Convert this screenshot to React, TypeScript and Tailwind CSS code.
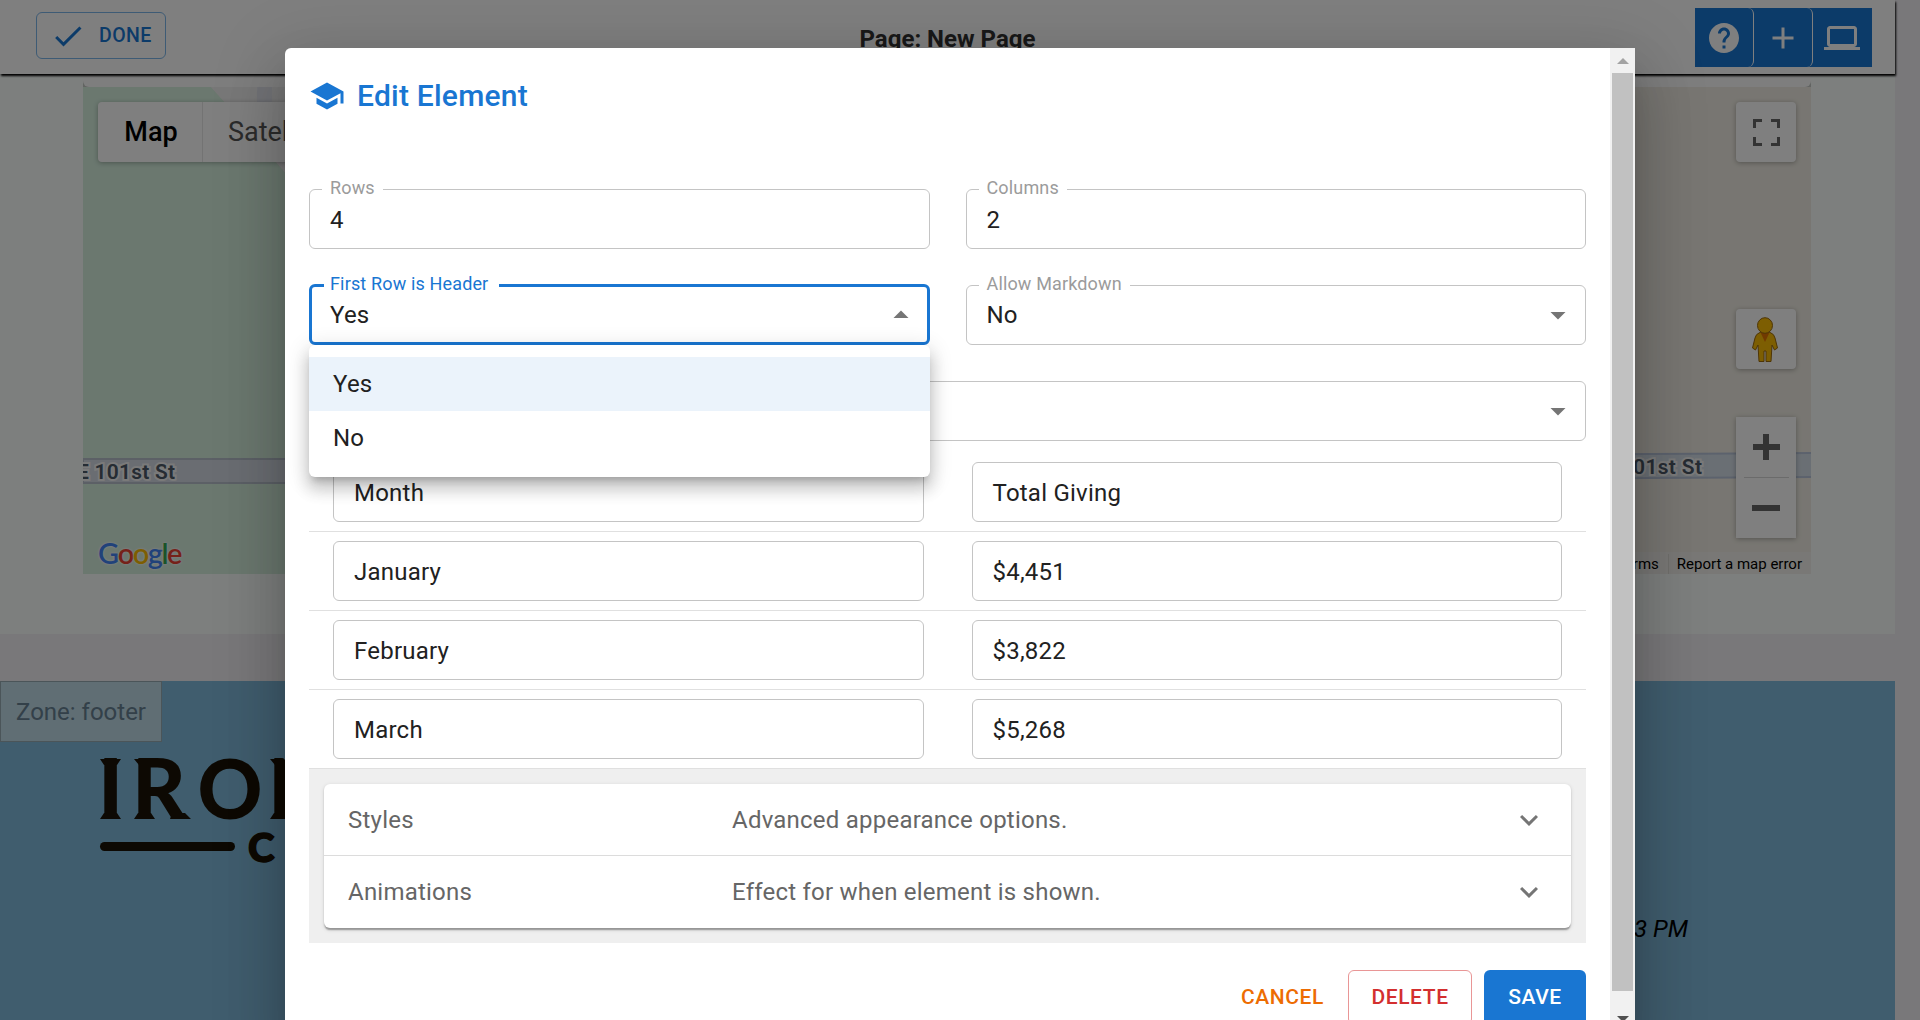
import type { ReactNode } from "react";

const PATHS = {
  check: "M9 16.17 4.83 12l-1.42 1.41L9 19 21 7l-1.41-1.41z",
  help: "M12 2C6.48 2 2 6.48 2 12s4.48 10 10 10 10-4.48 10-10S17.52 2 12 2zm1 17h-2v-2h2v2zm2.07-7.75-.9.92C13.45 12.9 13 13.5 13 15h-2v-.5c0-1.1.45-2.1 1.17-2.83l1.24-1.26c.37-.36.59-.86.59-1.41 0-1.1-.9-2-2-2s-2 .9-2 2H8c0-2.21 1.79-4 4-4s4 1.79 4 4c0 .88-.36 1.68-.93 2.25z",
  add: "M19 13h-6v6h-2v-6H5v-2h6V5h2v6h6v2z",
  computer: "M20 18c1.1 0 1.99-.9 1.99-2L22 6c0-1.1-.9-2-2-2H4c-1.1 0-2 .9-2 2v10c0 1.1.9 2 2 2H0v2h24v-2h-4zM4 6h16v10H4V6z",
  school: "M5 13.18v4L12 21l7-3.82v-4L12 17l-7-3.82zM12 3 1 9l11 6 9-4.91V17h2V9L12 3z",
  down: "m7 10 5 5 5-5z",
  up: "m7 14 5-5 5 5z",
  expand: "M16.59 8.59 12 13.17 7.41 8.59 6 10l6 6 6-6z",
};

function Icon({ name, className = "" }: { name: keyof typeof PATHS; className?: string }) {
  return (
    <svg viewBox="0 0 24 24" fill="currentColor" className={`size-9 shrink-0 ${className}`}>
      <path d={PATHS[name]} />
    </svg>
  );
}

function Field({ label, value, arrow, active }: { label?: string; value: string; arrow?: "up" | "down"; active?: boolean }) {
  return (
    <div
      className={`relative flex items-center justify-between rounded-md ${
        active ? "-mt-px h-[61px] border-3 border-[#1976d2] pt-px pr-2 pl-[18px]" : "h-15 border border-[#c4c4c4] pr-[9px] pl-5"
      }`}
    >
      {label && (
        <span
          className={`absolute bg-white text-lg leading-6 tracking-[0.15px] ${
            active ? "-top-[15px] left-3 pr-[11px] pl-[6px] text-[#1976d2]" : "-top-[14px] left-3 px-2 text-[#9b9b9b]"
          }`}
        >
          {label}
        </span>
      )}
      <span className={arrow ? "" : "pt-0.5"}>{value}</span>
      {arrow && <Icon name={arrow} className="text-[#757575]" />}
    </div>
  );
}

function ToolButton({ children, last }: { children: ReactNode; last?: boolean }) {
  return (
    <button className={`flex h-[59px] w-[59px] items-center justify-center rounded-md border-r text-white ${last ? "border-transparent" : "border-white"}`}>
      {children}
    </button>
  );
}

function MapView() {
  return (
    <div className="relative h-[487px] w-[1728px] overflow-hidden bg-[#f0ede4]">
      <svg className="absolute inset-0" width="1728" height="487" viewBox="0 0 1728 487">
        <path d="M0 0H128L146 20L300 200V487H0Z" fill="#d6f0df" />
        <path d="M128 0H300V200L146 20Z" fill="#f1f1f1" />
        <path d="M174 0h15v20h-15z" fill="#e4e6ee" />
        <path d="M0 372H300V396H0Z" fill="#d5dae4" stroke="#b9c1cd" strokeWidth="2" />
        <path d="M1400 368L1730 366V390L1400 392Z" fill="#d5dfe8" stroke="#b9c5da" strokeWidth="2" />
        <g fontFamily="Roboto" fontWeight="600" fontSize="21" fill="#4c5866" stroke="#f4f4f4" strokeWidth="4" paintOrder="stroke">
          <text x="-6" y="392" textLength="98">E 101st St</text>
          <text x="1520" y="387" textLength="99">E 101st St</text>
        </g>
      </svg>
      <div className="absolute top-[15px] left-[15px] flex h-15 items-center rounded-sm bg-white text-[27px] shadow-[0_1px_5px_rgba(0,0,0,0.3)]">
        <span className="flex h-15 w-[105px] items-center justify-center border-r border-[#e6e6e6] pt-0.5 pl-0.5 font-medium text-black">Map</span>
        <span className="px-[25px] pt-0.5 text-[#565656]">Satellite</span>
      </div>
      <div className="absolute bottom-[3px] left-[15px] flex font-[Lato] text-[29px] leading-[36px] font-semibold tracking-[-1.5px] [text-shadow:0_0_2px_#fff,0_0_3px_#fff]">
        <span className="text-[#4285f4]">G</span>
        <span className="text-[#ea4335]">o</span>
        <span className="text-[#fbbc04]">o</span>
        <span className="text-[#4285f4]">g</span>
        <span className="text-[#34a853]">l</span>
        <span className="text-[#ea4335]">e</span>
      </div>
      <div className="absolute top-[15px] left-[1653px] flex size-15 items-center justify-center rounded-sm bg-white shadow-[0_1px_5px_rgba(0,0,0,0.3)]">
        <svg width="27" height="27" viewBox="0 0 18 18" fill="#666">
          <path d="M0 0v6h2V2h4V0H0zm16 0h-4v2h4v4h2V0h-2zm0 16h-4v2h6v-6h-2v4zM2 12H0v6h6v-2H2v-4z" />
        </svg>
      </div>
      <div className="absolute top-[222px] left-[1653px] flex size-15 items-center justify-center rounded-sm bg-white pr-0.5 shadow-[0_1px_5px_rgba(0,0,0,0.3)]">
        <svg width="28" height="45" viewBox="0 0 28 45" fill="#fbbc04" stroke="#9c6a0c" strokeWidth="1">
          <path d="M8 16Q14 12 20 16Q23 17 24 21L26.500 31L23.500 33L21 28L20 44.500H15V34H13V44.500H8L7 28L4.500 33L1.500 31L4 21Q5 17 8 16Z" />
          <path d="M9.500 15.500L14 25L18.500 15.500Z" fill="#e37400" stroke="none" />
          <ellipse cx="14" cy="8.500" rx="7.500" ry="7.800" />
        </svg>
      </div>
      <div className="absolute top-[330px] left-[1653px] flex w-15 flex-col items-center bg-white shadow-[0_1px_5px_rgba(0,0,0,0.3)]">
        <svg width="60" height="60" viewBox="0 0 60 60" fill="#666">
          <path d="M27 17h6v10h11v6H33v10h-6V33H17v-6h10z" />
        </svg>
        <div className="h-px w-[45px] bg-[#d6d6d6]" />
        <svg width="60" height="60" viewBox="0 0 60 60" fill="#666">
          <path d="M16 27h28v6H16z" />
        </svg>
      </div>
      <div className="absolute right-0 bottom-0 flex h-[22px] items-center bg-[#f3f1ec] pt-0.5 text-[15px] leading-5 text-black">
        <span className="border-r border-[#e0ded8] px-[9px]">Terms</span>
        <span className="pr-[9px] pl-2">Report a map error</span>
      </div>
    </div>
  );
}

function FooterLogo() {
  return (
    <svg className="absolute top-[73px] left-[96px]" width="240" height="120" viewBox="0 0 240 120" fill="#1b1206">
      <g fontFamily="Lato" fontWeight="900" fontSize="83">
        <text x="14.500" y="65" textAnchor="middle">I</text>
        <text x="36" y="65">R</text>
        <text x="134" y="65" fontSize="81" textAnchor="middle" textLength="65" lengthAdjust="spacingAndGlyphs">O</text>
        <text x="172" y="65">N</text>
      </g>
      <path d="M4 5h21l-4 6H8zM4 65h21l-4-6H8zM38 5h14v6h-9zM38 65h21l-4-6H42zM74 65h21l-6-6H76zM174 5h14v6h-9zM174 65h21l-4-6h-13z" />
      <rect x="4" y="88" width="135" height="9" rx="4.500" />
      <text x="152" y="108" fontFamily="Lato" fontWeight="900" fontSize="40" stroke="#1b1206" strokeWidth="1.500">C</text>
    </svg>
  );
}

function PageBehind() {
  return (
    <div className="h-[1020px] w-[1895px] tracking-normal">
      <header className="relative z-10 grid h-[74px] grid-cols-[1fr_auto_1fr] items-start bg-white pr-[23px] pl-9 shadow-[1px_2px_2px_0_#000]">
        <button className="mt-3 flex h-[47px] w-[130px] items-center gap-[13px] rounded-md border border-[#7db6ea] pl-[13px] text-[19.5px] font-medium tracking-[0.4px] text-[#1976d2]">
          <Icon name="check" />
          <span className="pt-px">DONE</span>
        </button>
        <h1 className="mt-[21px] mr-[13px] text-2xl leading-9 font-bold text-[#333]">Page: New Page</h1>
        <div className="mt-2 flex justify-self-end bg-[#1976d2]">
          <ToolButton><Icon name="help" /></ToolButton>
          <ToolButton><Icon name="add" /></ToolButton>
          <ToolButton last><Icon name="computer" /></ToolButton>
        </div>
      </header>
      <section className="flex h-[560px] flex-col bg-[#fafffc] px-[83px]">
        <div className="h-[13px] w-[1728px] shrink-0 bg-[#c4c8c4]">
          <div className="h-full rounded-b-md bg-[#fcfcfc]" />
        </div>
        <MapView />
      </section>
      <div className="h-[47px]" />
      <footer className="relative h-[339px] bg-[#80bbdc]">
        <div className="flex h-[61px] w-[162px] items-center border border-[#97abb3] bg-[#c0dce8] pl-[15px] text-[#668193]">Zone: footer</div>
        <FooterLogo />
        <p className="mt-[171px] pr-[207px] text-right text-black italic">3 PM</p>
      </footer>
    </div>
  );
}

const rows = [
  ["Month", "Total Giving"],
  ["January", "$4,451"],
  ["February", "$3,822"],
  ["March", "$5,268"],
];

const panels = [
  ["Styles", "Advanced appearance options."],
  ["Animations", "Effect for when element is shown."],
];

function Dialog() {
  return (
    <div className="absolute top-12 left-[285px] flex h-[1010px] w-[1350px] overflow-hidden rounded-tl-md bg-white">
      <div className="w-[1325px] pr-[24px] pl-6">
        <div className="flex items-center gap-3 pt-[28px] text-[30px] leading-10 font-medium text-[#1976d2]">
          <Icon name="school" />
          Edit Element
        </div>
        <div className="mt-[73px] grid grid-cols-2 gap-9">
          <Field label="Rows" value="4" />
          <Field label="Columns" value="2" />
          <div className="relative">
            <Field label="First Row is Header" value="Yes" arrow="up" active />
            <ul className="absolute top-15 left-0 z-10 w-full rounded-md bg-white py-3 shadow-[0_7.5px_7.5px_-4.5px_rgba(0,0,0,0.2),0_12px_15px_1.5px_rgba(0,0,0,0.14),0_4.5px_21px_3px_rgba(0,0,0,0.12)]">
              <li className="flex h-[54px] items-center bg-[#ebf3fb] pl-6">Yes</li>
              <li className="flex h-[54px] items-center pl-6">No</li>
            </ul>
          </div>
          <Field label="Allow Markdown" value="No" arrow="down" />
          <div className="col-span-2">
            <Field value="" arrow="down" />
          </div>
        </div>
        <div className="mt-3">
          {rows.map(([month, total]) => (
            <div key={month} className="grid h-[79px] grid-cols-2 gap-12 border-b border-[#e0e0e0] px-6 pt-[9px]">
              <Field value={month} />
              <Field value={total} />
            </div>
          ))}
        </div>
        <div className="bg-[#efefef] p-[15px]">
          <div className="divide-y divide-[#dcdcdc] rounded-md bg-white text-[#666] shadow-[0_3px_1.5px_-1.5px_rgba(0,0,0,0.2),0_1.5px_1.5px_rgba(0,0,0,0.14),0_1.5px_4.5px_rgba(0,0,0,0.12)]">
            {panels.map(([name, note]) => (
              <div key={name} className="flex h-[72px] items-center pr-6 pl-6">
                <span className="w-[384px]">{name}</span>
                <span className="grow">{note}</span>
                <Icon name="expand" className="text-[#757575]" />
              </div>
            ))}
          </div>
        </div>
        <div className="mt-[27px] flex justify-end gap-3 text-[21px] font-medium tracking-[0.6px]">
          <button className="h-[55px] px-3 pb-0.5 text-[#ed6c02]">CANCEL</button>
          <button className="h-[55px] w-[124px] rounded-md border border-[#e99696] pb-0.5 text-[#d32f2f]">DELETE</button>
          <button className="h-[55px] w-[102px] rounded-md bg-[#1976d2] pb-0.5 text-white">SAVE</button>
        </div>
      </div>
      <div className="flex w-[25px] flex-col items-center bg-[#f1f1f1]">
        <svg width="25" height="25" viewBox="0 0 25 25" fill="#a3a3a3">
          <path d="M7 16h12l-6-6z" />
        </svg>
        <div className="h-[918px] w-[21px] bg-[#c1c1c1]" />
        <svg width="25" height="29" viewBox="0 0 25 29" fill="#505050">
          <path d="M7 25h12l-6 6z" />
        </svg>
      </div>
    </div>
  );
}

export default function App() {
  return (
    <div className="relative h-[1020px] w-[1920px] overflow-hidden bg-[#f2f0f5] font-[Roboto,sans-serif] text-2xl tracking-[0.225px] text-[#212121]">
      <PageBehind />
      <div className="absolute inset-0 z-20 bg-black/50">
        <div className="absolute top-12 left-[285px] h-[1010px] w-[1350px] rounded-md shadow-[0_16.5px_22.5px_-10.5px_rgba(0,0,0,0.2),0_36px_57px_4.5px_rgba(0,0,0,0.14),0_13.5px_69px_12px_rgba(0,0,0,0.12)]" />
        <Dialog />
      </div>
    </div>
  );
}
